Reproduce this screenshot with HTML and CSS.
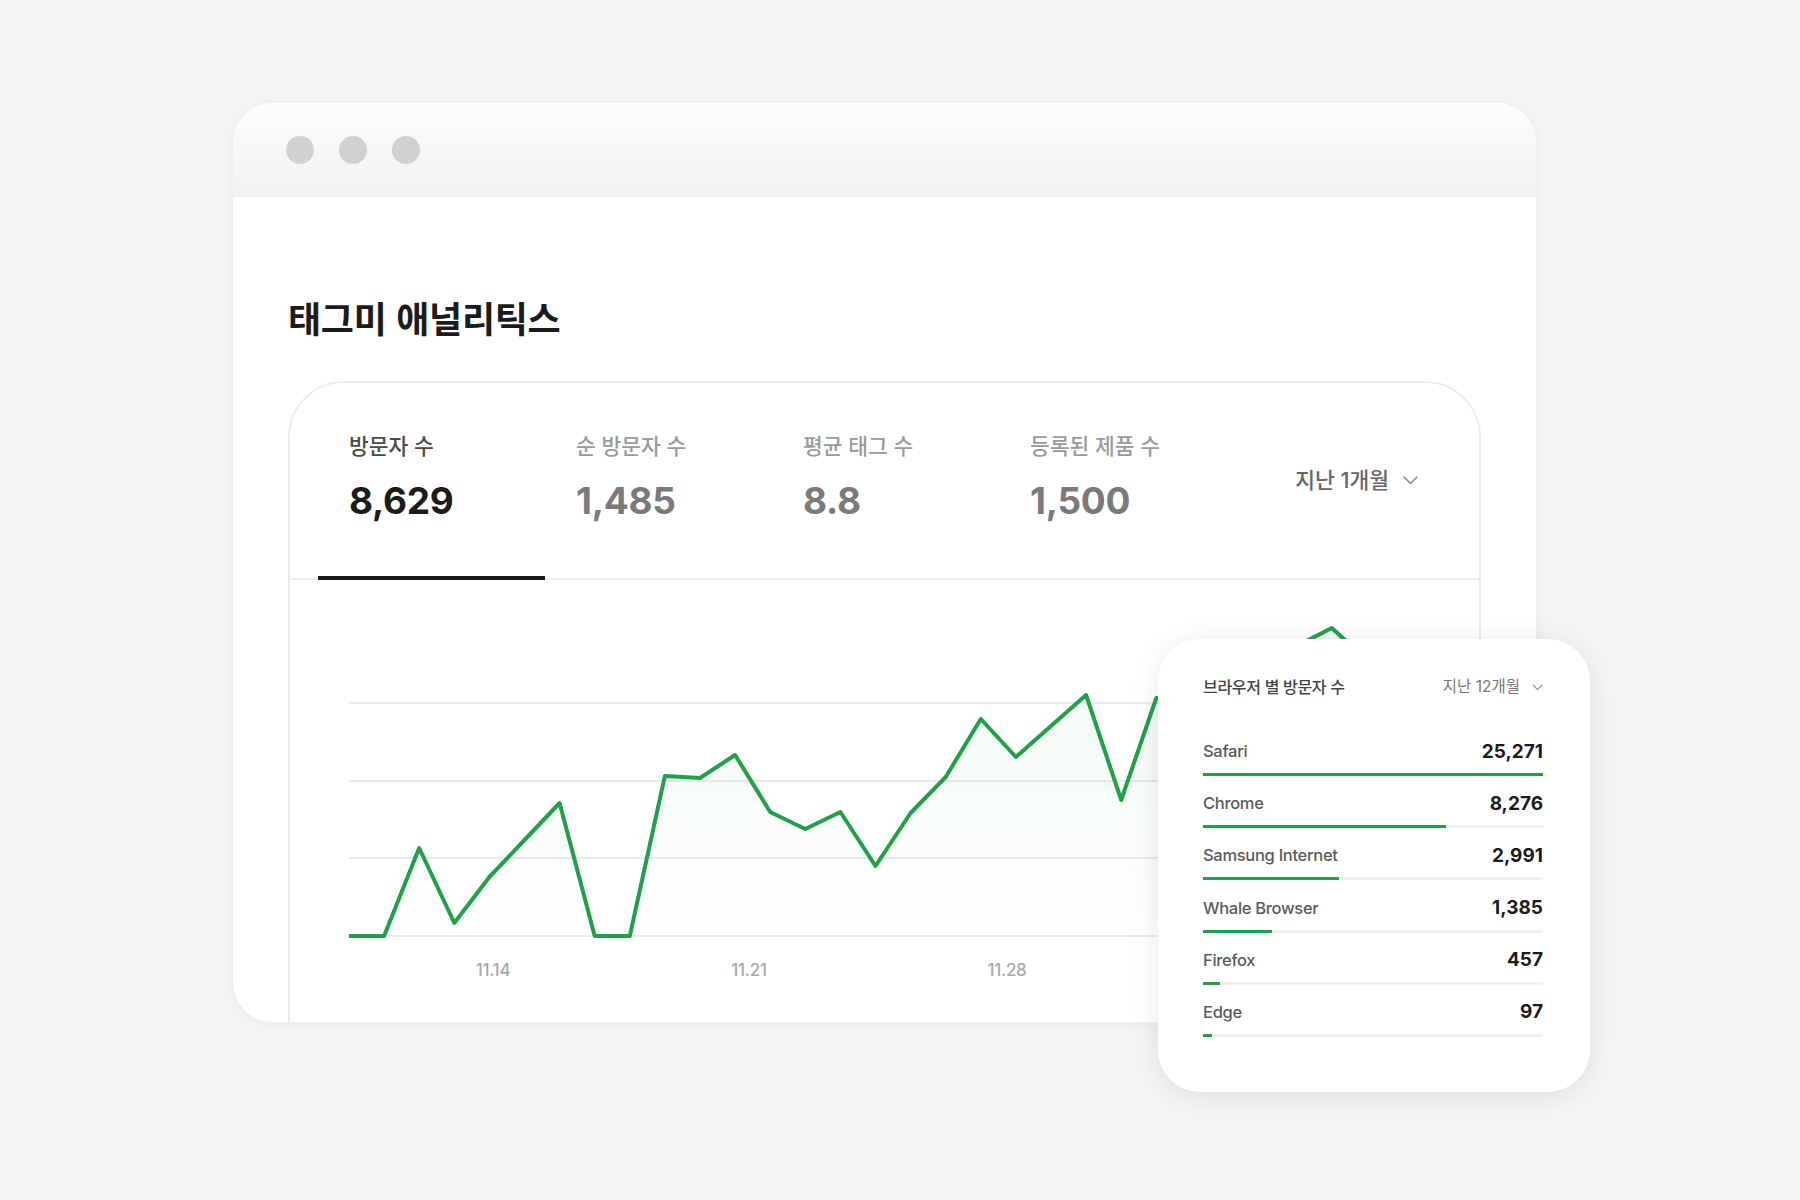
FILE: index.html
```html
<!DOCTYPE html>
<html lang="ko">
<head>
<meta charset="utf-8">
<title>태그미 애널리틱스</title>
<link rel="stylesheet" href="styles.css">
</head>
<body>
<div class="stage">
  <div class="window">
    <div class="titlebar">
      <span class="dot"></span><span class="dot"></span><span class="dot"></span>
    </div>
    <div class="content">
      <h1 class="title">태그미 애널리틱스</h1>
      <div class="card">
        <div class="tabs">
          <div class="tab active">
            <div class="tab-label">방문자 수</div>
            <div class="tab-value">8,629</div>
          </div>
          <div class="tab">
            <div class="tab-label">순 방문자 수</div>
            <div class="tab-value">1,485</div>
          </div>
          <div class="tab">
            <div class="tab-label">평균 태그 수</div>
            <div class="tab-value">8.8</div>
          </div>
          <div class="tab">
            <div class="tab-label">등록된 제품 수</div>
            <div class="tab-value">1,500</div>
          </div>
          <div class="period">
            <span>지난 1개월</span>
            <svg class="chev" width="15" height="9" viewBox="0 0 15 9"><polyline points="1,1 7.5,7.5 14,1" fill="none" stroke="#8a8a8a" stroke-width="1.5" stroke-linecap="round" stroke-linejoin="round"/></svg>
          </div>
        </div>
        <div class="chart">
          <svg width="1080" height="392" viewBox="0 0 1080 392">
            <defs>
              <linearGradient id="area" x1="0" y1="0" x2="0" y2="1">
                <stop offset="0" stop-color="#21a04a" stop-opacity="0.07"/>
                <stop offset="1" stop-color="#21a04a" stop-opacity="0"/>
              </linearGradient>
            </defs>
            <g stroke="#ebebeb" stroke-width="2">
              <line x1="0" y1="103" x2="1072" y2="103"/>
              <line x1="0" y1="181" x2="1072" y2="181"/>
              <line x1="0" y1="258" x2="1072" y2="258"/>
              <line x1="0" y1="336" x2="1072" y2="336"/>
            </g>
            <path fill="url(#area)" d="M0,336 L35.1,336 L70.2,248 L105.3,323 L140.4,277 L175.5,240 L210.6,203 L245.7,336 L280.8,336 L315.9,176 L351,178 L386.1,155 L421.2,212 L456.3,229 L491.4,212 L526.5,266 L561.6,213 L596.7,177 L631.8,119 L666.9,157 L702,126 L737.1,95 L772.2,200 L807.3,98 L842.4,110 L877.5,70 L912.6,95 L947.7,46 L982.8,28 L1017.9,60 L1053,100 L1053,336 Z"/>
            <polyline fill="none" stroke="#21a04a" stroke-width="4" stroke-linejoin="round" stroke-linecap="round" points="0,336 35.1,336 70.2,248 105.3,323 140.4,277 175.5,240 210.6,203 245.7,336 280.8,336 315.9,176 351,178 386.1,155 421.2,212 456.3,229 491.4,212 526.5,266 561.6,213 596.7,177 631.8,119 666.9,157 702,126 737.1,95 772.2,200 807.3,98 842.4,110 877.5,70 912.6,95 947.7,46 982.8,28 1017.9,60 1053,100"/>
            <g class="axis-label" text-anchor="middle">
              <text x="144" y="376">11.14</text>
              <text x="400" y="376">11.21</text>
              <text x="658" y="376">11.28</text>
            </g>
          </svg>
        </div>
      </div>
    </div>
  </div>

  <div class="popup">
    <div class="popup-head">
      <span class="popup-title">브라우저 별 방문자 수</span>
      <span class="popup-period">지난 12개월
        <svg class="chev-sm" width="11" height="7" viewBox="0 0 11 7"><polyline points="1,1 5.5,5.5 10,1" fill="none" stroke="#9a9a9a" stroke-width="1.2" stroke-linecap="round" stroke-linejoin="round"/></svg>
      </span>
    </div>
    <div class="list">
      <div class="row">
        <div class="row-top"><span class="name">Safari</span><span class="count">25,271</span></div>
        <div class="track"><div class="fill" style="width:100%"></div></div>
      </div>
      <div class="row">
        <div class="row-top"><span class="name">Chrome</span><span class="count">8,276</span></div>
        <div class="track"><div class="fill" style="width:71.5%"></div></div>
      </div>
      <div class="row">
        <div class="row-top"><span class="name">Samsung Internet</span><span class="count">2,991</span></div>
        <div class="track"><div class="fill" style="width:40%"></div></div>
      </div>
      <div class="row">
        <div class="row-top"><span class="name">Whale Browser</span><span class="count">1,385</span></div>
        <div class="track"><div class="fill" style="width:20.3%"></div></div>
      </div>
      <div class="row">
        <div class="row-top"><span class="name">Firefox</span><span class="count">457</span></div>
        <div class="track"><div class="fill" style="width:5%"></div></div>
      </div>
      <div class="row">
        <div class="row-top"><span class="name">Edge</span><span class="count">97</span></div>
        <div class="track"><div class="fill" style="width:2.6%"></div></div>
      </div>
    </div>
  </div>
</div>
</body>
</html>
```

FILE: styles.css
```css
html, body {
  margin: 0;
  padding: 0;
}

body {
  background: #f4f4f4;
  width: 1800px;
  height: 1200px;
  overflow: hidden;
  font-family: "Inter", "Noto Sans CJK KR", sans-serif;
  color: #1b1b1b;
}

.stage {
  position: relative;
  margin: 103px 0 0 233px;
  width: 1303px;
}

.window {
  width: 1303px;
  height: 919px;
  background: #fff;
  border-radius: 40px;
  overflow: hidden;
  box-shadow: 0 2px 18px rgba(0, 0, 0, 0.045);
}

.titlebar {
  height: 94px;
  box-sizing: border-box;
  padding-left: 53px;
  display: flex;
  align-items: center;
  gap: 25px;
  background: linear-gradient(#fdfdfd, #f1f1f1);
}

.dot {
  width: 28px;
  height: 28px;
  border-radius: 50%;
  background: #d1d1d1;
}

.content {
  padding: 98px 55px 0 55px;
}

.title {
  margin: 0;
  font-family: "Noto Sans CJK KR", sans-serif;
  font-size: 36px;
  line-height: 44px;
  font-weight: 700;
  letter-spacing: -0.3px;
  color: #1b1b1b;
}

.card {
  margin-top: 42px;
  height: 800px;
  border: 2px solid #ededed;
  border-radius: 56px;
  box-sizing: border-box;
}

.tabs {
  display: flex;
  padding: 0 61px 0 28px;
  border-bottom: 2px solid #efefef;
}

.tab {
  width: 227px;
  box-sizing: border-box;
  padding: 49px 0 53px 31px;
  margin-bottom: -2px;
  border-bottom: 4px solid transparent;
}

.tab.active {
  border-bottom-color: #1b1b1b;
}

.tab-label {
  font-size: 21.5px;
  line-height: 28px;
  font-weight: 500;
  color: #9a9a9a;
}

.tab-value {
  margin-top: 19px;
  font-size: 37px;
  line-height: 44px;
  font-weight: 700;
  letter-spacing: -0.3px;
  color: #7a7a7a;
}

.tab.active .tab-label {
  color: #4a4a4a;
}

.tab.active .tab-value {
  color: #1b1b1b;
}

.period {
  margin-left: auto;
  padding-top: 83px;
  display: flex;
  align-items: center;
  gap: 14px;
  height: 28px;
  font-size: 21.5px;
  line-height: 28px;
  font-weight: 500;
  color: #666;
}

.chev {
  display: block;
}

.chart {
  padding: 20px 0 0 59px;
}

.chart svg {
  display: block;
}

.axis-label {
  font-family: "Inter", sans-serif;
  font-size: 17px;
  font-weight: 500;
  fill: #a9a9a9;
  letter-spacing: -0.3px;
}

.popup {
  position: absolute;
  left: 925px;
  top: 536px;
  width: 432px;
  height: 453px;
  box-sizing: border-box;
  padding: 36px 47px 0 45px;
  background: #fff;
  border-radius: 42px;
  box-shadow: 0 4px 30px rgba(0, 0, 0, 0.09);
}

.popup-head {
  display: flex;
  justify-content: space-between;
  align-items: center;
  height: 24px;
  line-height: 24px;
}

.popup-title {
  font-size: 16px;
  font-weight: 500;
  letter-spacing: -0.3px;
  color: #444;
}

.popup-period {
  display: flex;
  align-items: center;
  gap: 12px;
  font-size: 15.5px;
  color: #777;
}

.chev-sm {
  display: block;
}

.list {
  margin-top: 40px;
  display: flex;
  flex-direction: column;
  gap: 15.2px;
}

.row-top {
  display: flex;
  justify-content: space-between;
  align-items: center;
  height: 24px;
}

.name {
  font-size: 16.5px;
  font-weight: 500;
  letter-spacing: -0.3px;
  color: #5a5a5a;
}

.count {
  font-size: 19px;
  font-weight: 700;
  color: #1b1b1b;
}

.track {
  margin-top: 10px;
  height: 3px;
  background: #f0f0f0;
}

.fill {
  height: 100%;
  background: #21a04a;
}
```
